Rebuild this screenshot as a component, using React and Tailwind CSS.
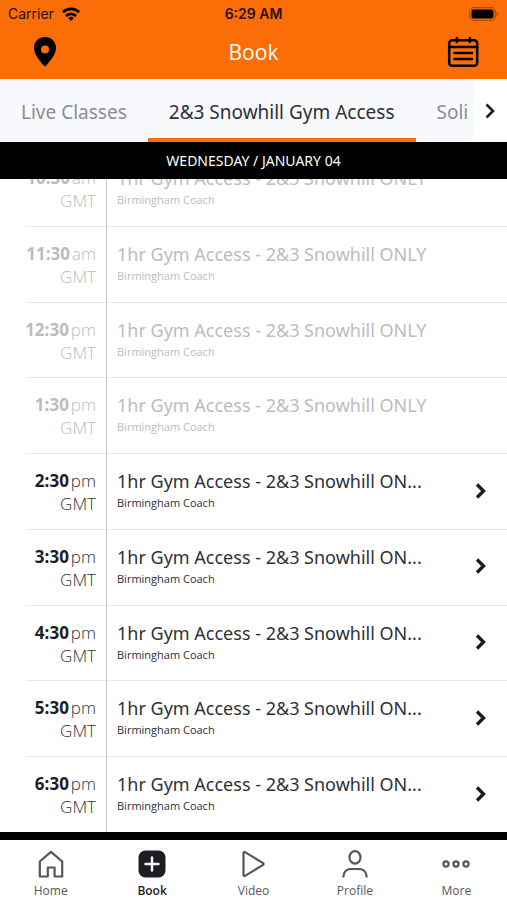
import React, { useState } from 'react';

const CLASSES = [
    { time: '10:30', period: 'am', past: true },
    { time: '11:30', period: 'am', past: true },
    { time: '12:30', period: 'pm', past: true },
    { time: '1:30', period: 'pm', past: true },
    { time: '2:30', period: 'pm', past: false },
    { time: '3:30', period: 'pm', past: false },
    { time: '4:30', period: 'pm', past: false },
    { time: '5:30', period: 'pm', past: false },
    { time: '6:30', period: 'pm', past: false },
];

const HomeIcon = () => (
    <svg viewBox="0 0 28 28" className="h-7 w-7" fill="none" stroke="currentColor" strokeWidth="2.2" strokeLinejoin="round">
        <path d="M2.8 11.5 14 1.8l11.2 9.7v15H17.6v-9h-6.800v9H2.800z" />
    </svg>
);

const BookIcon = () => (
    <svg viewBox="0 0 28 28" className="h-7 w-7">
        <rect x="0.5" y="0.5" width="27" height="27" rx="7" fill="#1c1e22" />
        <path d="M14 7.5v13M7.5 14h13" stroke="white" strokeWidth="2.4" strokeLinecap="round" />
    </svg>
);

const VideoIcon = () => (
    <svg viewBox="0 0 28 28" className="h-7 w-7" fill="none" stroke="currentColor" strokeWidth="2.2" strokeLinejoin="round">
        <path d="M4.5 3a1 1 0 0 1 1.5-.9l18 11a1 1 0 0 1 0 1.8L6 25.9a1 1 0 0 1-1.5-.9z" />
    </svg>
);

const ProfileIcon = () => (
    <svg viewBox="0 0 28 28" className="h-7 w-7" fill="none" stroke="currentColor" strokeWidth="2.2">
        <ellipse cx="14" cy="7.4" rx="5.5" ry="6.2" />
        <path d="M2.2 27.5C2.6 21.5 6 19 10 19h8c4 0 7.4 2.5 7.8 8.5" />
    </svg>
);

const MoreIcon = () => (
    <svg viewBox="0 0 28 28" className="h-7 w-7" fill="none" stroke="currentColor" strokeWidth="2.2">
        <circle cx="4" cy="14" r="2.6" />
        <circle cx="14" cy="14" r="2.6" />
        <circle cx="24" cy="14" r="2.6" />
    </svg>
);

const NAV_ITEMS = [
    { label: 'Home', Icon: HomeIcon },
    { label: 'Book', Icon: BookIcon },
    { label: 'Video', Icon: VideoIcon },
    { label: 'Profile', Icon: ProfileIcon },
    { label: 'More', Icon: MoreIcon },
];

const StatusBar = () => (
    <div className="grid h-7 shrink-0 grid-cols-3 items-center px-2 font-['Inter',sans-serif] text-sm text-[#2a1200]">
        <div className="flex items-center gap-2">
            <span>Carrier</span>
            <svg viewBox="0 0 18 14" className="h-3.5 w-[18px]" fill="none" stroke="black" strokeWidth="2.8">
                <path d="M1 5.2a11.5 11.5 0 0 1 16 0" />
                <path d="M4 9a7 7 0 0 1 10 0" />
                <path d="M9 14 6.2 11.200a4 4 0 0 1 5.600 0z" fill="black" stroke="none" />
            </svg>
        </div>
        <span className="text-center font-semibold">6:29 AM</span>
        <svg viewBox="0 0 30 14" className="h-3.5 w-[30px] justify-self-end">
            <rect x="0.7" y="0.7" width="25.6" height="12.6" rx="4" fill="none" stroke="#b04c00" strokeWidth="1.2" />
            <rect x="2.5" y="2.5" width="22" height="9" rx="2" fill="black" />
            <path d="M27.6 5v4c1-.3 1.6-1 1.6-2s-.6-1.7-1.6-2z" fill="#b04c00" />
        </svg>
    </div>
);

const Header = () => (
    <div className="grid h-[51px] shrink-0 grid-cols-3 items-center px-7 pb-1">
        <button type="button" aria-label="Location" className="ml-1 justify-self-start">
            <svg viewBox="0 0 26 32" className="h-8 w-[26px]">
                <path
                    fillRule="evenodd"
                    d="M13 1C6.6 1 2 5.7 2 11.8c0 7 5.6 12.4 9.600 17.800.8 1 2 1 2.800 0C18.400 24.200 24 18.800 24 11.800 24 5.700 19.400 1 13 1zm0 8.400a4 4 0 1 1 0 8 4 4 0 0 1 0-8z"
                />
            </svg>
        </button>
        <h1 className="text-center text-[21px] leading-7 text-white">Book</h1>
        <button type="button" aria-label="Calendar" className="justify-self-end">
            <svg viewBox="0 0 32 32" className="h-8 w-8" fill="none" stroke="black" strokeWidth="2.5" strokeLinecap="round">
                <rect x="2.2" y="4.2" width="28" height="25.5" rx="3" />
                <path d="M2.2 11h28M9.8 2v4M22.800 2v4" />
                <path d="M7.5 17h17.500M7.500 23h17.500" />
            </svg>
        </button>
    </div>
);

const Tabs = () => (
    <div className="flex h-[63px] shrink-0 bg-[#f7f9fc] font-['Noto_Sans',sans-serif] text-[19px] whitespace-nowrap text-[#8b8d93]">
        <div className="flex min-w-0 flex-1 overflow-hidden">
            <button type="button" className="shrink-0 px-[21px] pt-1">Live Classes</button>
            <button type="button" className="shrink-0 border-b-4 border-[#fb6d06] px-[21px] pt-2 text-[#2e3035]">
                2&amp;3 Snowhill Gym Access
            </button>
            <button type="button" className="shrink-0 pt-1 pl-[21px]">Soli</button>
        </div>
        <button type="button" aria-label="More tabs" className="flex w-[34px] shrink-0 items-center justify-center bg-white">
            <svg viewBox="0 0 10 16" className="h-4 w-2.5" fill="none" stroke="#1c1e22" strokeWidth="2.6">
                <path d="m1.5 1.5 6.5 6.5-6.500 6.500" />
            </svg>
        </button>
    </div>
);

const ClassRow = ({ time, period, past }) => (
    <li className={`flex min-h-0 flex-1 ${past ? 'text-[#bcbcbc]' : 'text-[#2e3035]'}`}>
        <div className="ml-[26px] w-20 border-t border-[#e9e9e9] pt-[15px] pr-2.5 text-right text-[17px] leading-[23px]">
            <div className="flex items-baseline justify-end gap-0.5">
                <span className={past ? 'font-bold' : 'font-bold text-[#1c1e22]'}>{time}</span>
                <span className="font-light">{period}</span>
            </div>
            <div className="font-light">GMT</div>
        </div>
        <div className="flex min-w-0 flex-1 items-center border-t border-l border-t-[#e9e9e9] border-l-[#c4c4c4] pr-5 pb-0.5 pl-2.5">
            <div className="min-w-0 flex-1 self-start pt-[15px]">
                <div className="font-['Noto_Sans',sans-serif] text-lg leading-6 whitespace-nowrap">
                    {past ? '1hr Gym Access - 2&3 Snowhill ONLY' : '1hr Gym Access - 2&3 Snowhill ON...'}
                </div>
                <div className="text-[11px] leading-5">Birmingham Coach</div>
            </div>
            {!past && (
                <button type="button" aria-label={`Book ${time} ${period}`}>
                    <svg viewBox="0 0 12 16" className="h-4 w-3" fill="none" stroke="#1c1e22" strokeWidth="3.4">
                        <path d="m2 1.5 6.5 6.5L2 14.500" />
                    </svg>
                </button>
            )}
        </div>
    </li>
);

const App = () => {
    const [active, setActive] = useState('Book');

    return (
        <div className="flex h-screen flex-col overflow-hidden bg-white font-['Open_Sans','Noto_Sans',sans-serif]">
            <header className="shrink-0 bg-[#fb6d06]">
                <StatusBar />
                <Header />
            </header>
            <Tabs />
            <h2 className="relative flex h-[37px] shrink-0 items-center justify-center bg-black font-['Noto_Sans',sans-serif] text-sm text-white">
                WEDNESDAY / JANUARY 04
            </h2>

            {/* Scrolled to the end of the day */}
            <main className="flex min-h-0 flex-1 flex-col justify-end overflow-hidden">
                <ul className="flex h-[682px] shrink-0 flex-col">
                    {CLASSES.map((item) => (
                        <ClassRow key={item.time} {...item} />
                    ))}
                </ul>
            </main>

            <nav className="grid h-[68px] shrink-0 grid-cols-5 border-t-8 border-black bg-white">
                {NAV_ITEMS.map(({ label, Icon }) => (
                    <button
                        key={label}
                        type="button"
                        onClick={() => setActive(label)}
                        className={`flex flex-col items-center gap-1 pt-2.5 text-xs leading-[18px] ${active === label ? 'font-semibold text-[#1c1e22]' : 'font-medium text-[#55575c]'}`}
                    >
                        <Icon />
                        <span>{label}</span>
                    </button>
                ))}
            </nav>
        </div>
    );
};

export default App;
